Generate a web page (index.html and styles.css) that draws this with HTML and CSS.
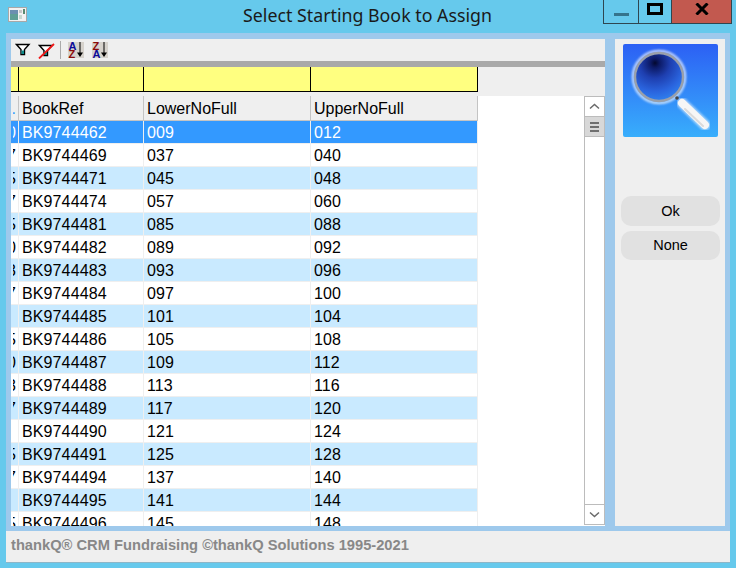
FILE: index.html
```html
<!DOCTYPE html>
<html lang="en">
<head>
<meta charset="utf-8">
<title>Select Starting Book to Assign</title>
<link rel="stylesheet" href="styles.css">
</head>
<body>
<div class="window">
  <header class="titlebar">
    <svg class="app-icon" width="20" height="16" viewBox="0 0 20 16">
      <rect x="0.5" y="0.5" width="18" height="14" fill="#f2f2f2" stroke="#a8a8a8"/>
      <rect x="2" y="3" width="8" height="10" fill="#5f9f96"/>
      <rect x="2" y="3" width="8" height="4" fill="#6c8fb0"/>
      <rect x="11" y="3" width="3" height="3" fill="#c8c8c8"/>
      <rect x="11" y="8" width="3" height="4" fill="#c8d8d0"/>
      <rect x="15" y="2" width="2" height="5" fill="#5a8a70"/>
    </svg>
    <h1 class="title">Select Starting Book to Assign</h1>
    <div class="win-buttons">
      <div class="win-btn win-min"><span class="min-bar"></span></div>
      <div class="win-btn win-max"><span class="max-box"></span></div>
      <div class="win-btn win-close">
        <svg width="14" height="12" viewBox="0 0 14 12"><path d="M1.5 0.5 L12.5 11.5 M12.5 0.5 L1.5 11.5" stroke="#000" stroke-width="3"/></svg>
      </div>
    </div>
  </header>

  <div class="client">
    <main class="grid-panel">
      <div class="toolbar">
        <svg class="tool" width="16" height="14" viewBox="0 0 16 14"><path d="M1.500 1.500 H14 L9.500 6.500 V11.500 H6 V6.500 Z" fill="#fff" stroke="#000" stroke-width="1.400"/><path d="M6.500 7.500 H9 V11 H6.500 Z" fill="#0b8a8a"/></svg>
        <svg class="tool tool-x" width="17" height="16" viewBox="0 0 17 16"><path d="M1.500 2.500 H14 L9.500 7.500 V12.500 H6 V7.500 Z" fill="#fff" stroke="#000" stroke-width="1.400"/><path d="M6.500 8.500 H9 V12 H6.500 Z" fill="#0b8a8a"/><path d="M1 15.500 L16 1" stroke="#f01818" stroke-width="1.800"/></svg>
        <span class="tool-sep"></span>
        <span class="sort">
          <svg width="16" height="16" viewBox="0 0 16 16">
            <rect width="16" height="16" fill="#d6d2cc"/>
            <text class="sort-letter" x="0.500" y="8" fill="#0a0a9a">A</text>
            <text class="sort-letter" x="0.500" y="16" fill="#8a0a0a">Z</text>
            <path d="M12 0 V11" stroke="#000"/><path d="M9 10.500 H15 L12 15 Z" fill="#000"/>
          </svg>
        </span>
        <span class="sort sort-2">
          <svg width="16" height="16" viewBox="0 0 16 16">
            <rect width="16" height="16" fill="#d6d2cc"/>
            <text class="sort-letter" x="0.500" y="8" fill="#8a0a0a">Z</text>
            <text class="sort-letter" x="0.500" y="16" fill="#0a0a9a">A</text>
            <path d="M12 0 V11" stroke="#000"/><path d="M9 10.500 H15 L12 15 Z" fill="#000"/>
          </svg>
        </span>
      </div>
      <div class="splitter"></div>
      <div class="filter-band">
        <div class="filter-row">
          <div class="f-cell f-stub"></div>
          <div class="f-cell f-a"></div>
          <div class="f-cell f-b"></div>
          <div class="f-cell f-c"></div>
        </div>
      </div>
      <div class="data-area">
        <div class="table">
          <div class="row head">
            <div class="cell stub"><span class="stub-text">.</span></div>
            <div class="cell">BookRef</div>
            <div class="cell">LowerNoFull</div>
            <div class="cell last">UpperNoFull</div>
          </div>
          <div class="row selected"><div class="cell stub"><span class="stub-text">0</span></div><div class="cell">BK9744462</div><div class="cell">009</div><div class="cell last">012</div></div>
          <div class="row"><div class="cell stub"><span class="stub-text">7</span></div><div class="cell">BK9744469</div><div class="cell">037</div><div class="cell last">040</div></div>
          <div class="row alt"><div class="cell stub"><span class="stub-text">5</span></div><div class="cell">BK9744471</div><div class="cell">045</div><div class="cell last">048</div></div>
          <div class="row"><div class="cell stub"><span class="stub-text">7</span></div><div class="cell">BK9744474</div><div class="cell">057</div><div class="cell last">060</div></div>
          <div class="row alt"><div class="cell stub"><span class="stub-text">5</span></div><div class="cell">BK9744481</div><div class="cell">085</div><div class="cell last">088</div></div>
          <div class="row"><div class="cell stub"><span class="stub-text">0</span></div><div class="cell">BK9744482</div><div class="cell">089</div><div class="cell last">092</div></div>
          <div class="row alt"><div class="cell stub"><span class="stub-text">3</span></div><div class="cell">BK9744483</div><div class="cell">093</div><div class="cell last">096</div></div>
          <div class="row"><div class="cell stub"><span class="stub-text">7</span></div><div class="cell">BK9744484</div><div class="cell">097</div><div class="cell last">100</div></div>
          <div class="row alt"><div class="cell stub"></div><div class="cell">BK9744485</div><div class="cell">101</div><div class="cell last">104</div></div>
          <div class="row"><div class="cell stub"><span class="stub-text">5</span></div><div class="cell">BK9744486</div><div class="cell">105</div><div class="cell last">108</div></div>
          <div class="row alt"><div class="cell stub"><span class="stub-text">0</span></div><div class="cell">BK9744487</div><div class="cell">109</div><div class="cell last">112</div></div>
          <div class="row"><div class="cell stub"><span class="stub-text">3</span></div><div class="cell">BK9744488</div><div class="cell">113</div><div class="cell last">116</div></div>
          <div class="row alt"><div class="cell stub"><span class="stub-text">7</span></div><div class="cell">BK9744489</div><div class="cell">117</div><div class="cell last">120</div></div>
          <div class="row"><div class="cell stub"></div><div class="cell">BK9744490</div><div class="cell">121</div><div class="cell last">124</div></div>
          <div class="row alt"><div class="cell stub"><span class="stub-text">5</span></div><div class="cell">BK9744491</div><div class="cell">125</div><div class="cell last">128</div></div>
          <div class="row"><div class="cell stub"><span class="stub-text">7</span></div><div class="cell">BK9744494</div><div class="cell">137</div><div class="cell last">140</div></div>
          <div class="row alt"><div class="cell stub"></div><div class="cell">BK9744495</div><div class="cell">141</div><div class="cell last">144</div></div>
          <div class="row"><div class="cell stub"><span class="stub-text">5</span></div><div class="cell">BK9744496</div><div class="cell">145</div><div class="cell last">148</div></div>
        </div>
        <div class="scrollbar">
          <div class="sb-btn">
            <svg width="11" height="7" viewBox="0 0 11 7"><path d="M1 5.500 L5.500 1.500 L10 5.500" fill="none" stroke="#6a6a6a" stroke-width="1.500"/></svg>
          </div>
          <div class="sb-thumb"><span></span><span></span><span></span></div>
          <div class="sb-track"></div>
          <div class="sb-btn sb-down">
            <svg width="11" height="7" viewBox="0 0 11 7"><path d="M1 1.500 L5.500 5.500 L10 1.500" fill="none" stroke="#6a6a6a" stroke-width="1.500"/></svg>
          </div>
        </div>
      </div>
    </main>

    <aside class="side-panel">
      <svg class="logo" width="95" height="93" viewBox="0 0 95 93">
        <defs>
          <linearGradient id="bg" x1="0" y1="0" x2="0" y2="1"><stop offset="0" stop-color="#2c60f4"/><stop offset="1" stop-color="#38aefc"/></linearGradient>
          <radialGradient id="lens" gradientUnits="userSpaceOnUse" cx="32" cy="19" r="38"><stop offset="0" stop-color="#03082e"/><stop offset="0.12" stop-color="#0c1a66"/><stop offset="0.4" stop-color="#1e3fb0"/><stop offset="0.75" stop-color="#2a64de"/><stop offset="1" stop-color="#2f80ee"/></radialGradient>
          <filter id="glow" x="-20%" y="-20%" width="140%" height="140%"><feGaussianBlur stdDeviation="1.200"/></filter>
        </defs>
        <rect width="95" height="93" rx="2" fill="url(#bg)"/>
        <circle cx="36" cy="33" r="26" fill="none" stroke="#fff" stroke-width="2.500" opacity="0.75" filter="url(#glow)"/>
        <path d="M59 59 L82 81" stroke="#fff" stroke-width="11" stroke-linecap="round" opacity="0.55" filter="url(#glow)"/>
        <circle cx="36" cy="33" r="24" fill="url(#lens)" stroke="#9aa0aa" stroke-width="2.400"/>
        <path d="M59 59 L82 81" stroke="#f6f6f6" stroke-width="8" stroke-linecap="round"/>
        <path d="M62 65 L80 82" stroke="#cfcfcf" stroke-width="2" stroke-linecap="round" opacity="0.7"/>
        <circle cx="54" cy="54" r="1.800" fill="#444"/>
      </svg>
      <div class="side-buttons">
        <button class="btn" type="button">Ok</button>
        <button class="btn" type="button">None</button>
      </div>
    </aside>
  </div>

  <footer class="footer">thankQ® CRM Fundraising ©thankQ Solutions 1995-2021</footer>
</div>
</body>
</html>
```
FILE: styles.css
```css
* { box-sizing: border-box; }
html, body { margin: 0; padding: 0; }
body { width: 736px; height: 568px; overflow: hidden; background: #66c9ec; font-family: "Liberation Sans", Arial, sans-serif; }

.window { width: 736px; height: 568px; display: flex; flex-direction: column; }

.titlebar { height: 33px; display: flex; align-items: flex-start; flex: none; }
.app-icon { margin: 7px 0 0 8px; flex: none; }
.title { flex: none; width: 576px; margin: 0; padding-left: 103px; text-align: center; font: 400 17.800px/31px "Noto Sans", sans-serif; color: #1a1a1a; white-space: nowrap; }
.win-buttons { display: flex; height: 24px; flex: none; border: 1px solid #2e4650; border-top: 0; margin-left: -1px; }
.win-btn { height: 23px; display: flex; align-items: center; justify-content: center; }
.win-min { width: 35px; border-right: 1px solid #2e4650; }
.win-max { width: 33px; border-right: 1px solid #2e4650; }
.win-close { width: 59px; background: #c2594f; }
.min-bar { width: 15px; height: 3px; background: #35748c; margin-top: 6px; }
.max-box { width: 16px; height: 12px; border: 3px solid #000; margin-top: -5px; }
.win-close svg { margin-top: -6px; }

.client { flex: none; height: 498px; margin: 0 6px; padding: 6px 5px 5px; background: #9ec9ec; display: flex; gap: 10px; }
.grid-panel { width: 594px; height: 487px; display: flex; flex-direction: column; background: #fff; }

.toolbar { height: 22px; flex: none; background: #efefef; display: flex; align-items: center; padding-left: 4px; }
.tool { flex: none; }
.tool-x { margin-left: 7px; margin-top: 1px; }
.tool-sep { width: 1px; height: 18px; background: #aaa; margin: 0 7px 0 5px; }
.sort { display: block; height: 16px; }
.sort-2 { margin-left: 8px; }
.sort-letter { font: 700 11px "Liberation Sans", sans-serif; }

.splitter { height: 6px; flex: none; background: #a9a9a9; }

.filter-band { height: 29px; flex: none; background: #efefef; }
.filter-row { display: grid; grid-template-columns: 7px 125px 167px 168px; height: 25px; background: #ffff80; border-bottom: 1px solid #000; width: 467px; }
.f-a, .f-b, .f-c { border-left: 1px solid #000; }
.f-c { border-right: 1px solid #000; }

.data-area { flex: 1; min-height: 0; display: flex; background: #fff; overflow: hidden; }
.table { width: 573px; flex: none; overflow: hidden; }

.row { display: grid; grid-template-columns: 7px 125px 167px 168px; width: 467px; height: 23px; font-size: 16px; line-height: 23px; letter-spacing: 0.120px; color: #000; background: #fff; border-bottom: 1px solid #efefef; }
.alt { background: #c9eaff; }
.selected { background: #3399ff; color: #fff; }
.head { height: 25px; line-height: 25px; letter-spacing: 0; background: #efefef; border-bottom: 1px solid #c4c4c4; }

.cell { border-left: 1px solid #efefef; padding-left: 3px; white-space: nowrap; overflow: hidden; }
.stub { border-left: 0; padding: 0 2px 0 0; display: flex; justify-content: flex-end; }
.stub-text { flex: none; width: 3px; overflow: hidden; direction: rtl; }
.last { border-right: 1px solid #efefef; }
.head .cell { border-left-color: #c4c4c4; }
.head .stub-text { color: #3399ff; }
.head .last { border-right-color: #c4c4c4; }

.scrollbar { width: 21px; flex: none; height: 429px; display: flex; flex-direction: column; background: #fff; border-left: 1px solid #bcbcbc; border-right: 1px solid #bcbcbc; }
.sb-btn { height: 21px; flex: none; display: flex; align-items: center; justify-content: center; border-top: 1px solid #bcbcbc; border-bottom: 1px solid #bcbcbc; }
.sb-thumb { height: 20px; flex: none; background: #d8d8d8; border-bottom: 1px solid #bcbcbc; display: flex; flex-direction: column; align-items: center; justify-content: center; gap: 2px; }
.sb-thumb span { width: 9px; height: 2px; background: #6f6f6f; }
.sb-track { flex: 1; }

.side-panel { width: 110px; height: 487px; background: #efefef; display: flex; flex-direction: column; }
.logo { display: block; margin: 5px 0 0 8px; flex: none; }
.side-buttons { margin: 59px 0 0 6px; display: flex; flex-direction: column; gap: 5px; }
.btn { width: 99px; height: 29.500px; padding: 0; border: 0; border-radius: 10px; background: #e1e1e1; color: #000; font: 400 14.500px "Liberation Sans", sans-serif; }

.footer { flex: none; height: 31px; margin: 0 6px; background: #efefef; color: #888; font-size: 14.700px; font-weight: 700; line-height: 29px; padding-left: 5px; box-shadow: 0 1px 0 #8cb6c8; }
```
